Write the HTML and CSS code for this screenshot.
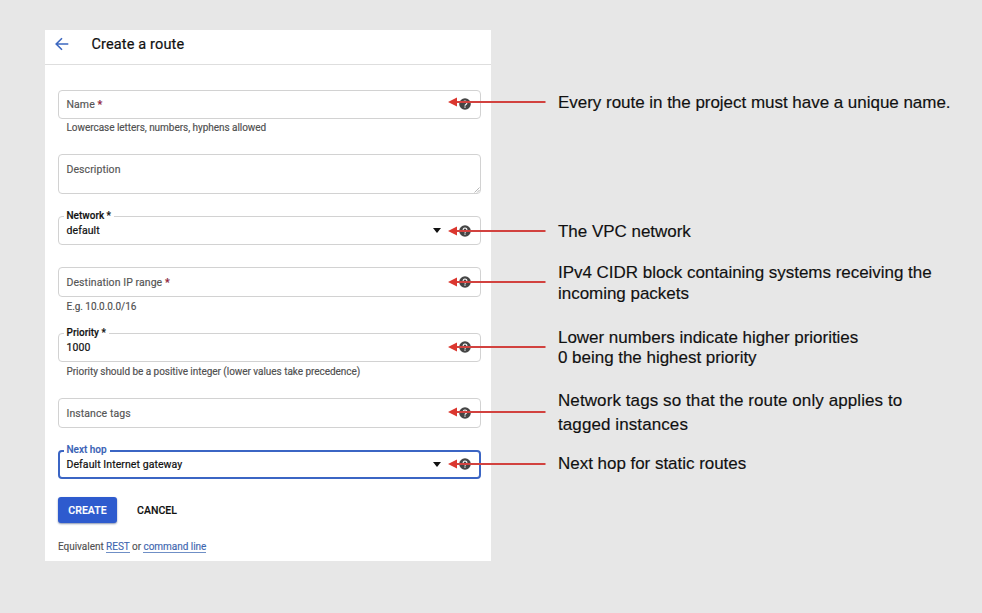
FILE: index.html
```html
<!DOCTYPE html>
<html lang="en">
<head>
<meta charset="utf-8">
<title>Create a route</title>
<link rel="stylesheet" href="styles.css">
</head>
<body>
<svg width="0" height="0" class="defs">
  <symbol id="help" viewBox="0 0 12 12">
    <circle cx="6" cy="6" r="5.8" fill="#454545"/>
    <path d="M4.1 4.9a1.9 1.9 0 1 1 2.9 1.6c-.7.45-1 .7-1 1.3" fill="none" stroke="#fff" stroke-width="1.1"/>
    <rect x="5.4" y="8.5" width="1.2" height="1.2" fill="#fff"/>
  </symbol>
  <symbol id="arrow" viewBox="0 0 98 10">
    <path d="M8 5H97.500" stroke="#d2423f" stroke-width="2"/>
    <path d="M0 5L9 .6V9.400Z" fill="#db372f"/>
  </symbol>
</svg>
<div class="stage">
  <main class="panel">
    <header class="bar">
      <svg class="back" width="14" height="14" viewBox="0 0 14 14"><path d="M13.300 7H1.500M7 1.200L1.200 7L7 12.800" fill="none" stroke="#3d68c0" stroke-width="1.600"/></svg>
      <h1>Create a route</h1>
    </header>
    <form class="form">
      <div class="field name"><span class="ph">Name <b>*</b></span><svg class="help"><use href="#help"/></svg><svg class="arrow up"><use href="#arrow"/></svg></div>
      <p class="hint t-low">Lowercase letters, numbers, hyphens allowed</p>
      <div class="field desc"><span class="ph">Description</span><svg class="grip" width="6" height="6" viewBox="0 0 6 6"><path d="M.5 5.500L5.500 .5M3 5.500L5.500 3" stroke="#999" stroke-width=".7"/></svg></div>
      <div class="field network"><span class="label">Network *</span><span class="val">default</span><i class="caret"></i><svg class="help"><use href="#help"/></svg><svg class="arrow"><use href="#arrow"/></svg></div>
      <div class="field dest"><span class="ph">Destination IP range <b>*</b></span><svg class="help"><use href="#help"/></svg><svg class="arrow"><use href="#arrow"/></svg></div>
      <p class="hint t-eg">E.g. 10.0.0.0/16</p>
      <div class="field priority"><span class="label">Priority *</span><span class="val">1000</span><svg class="help"><use href="#help"/></svg><svg class="arrow"><use href="#arrow"/></svg></div>
      <p class="hint t-should">Priority should be a positive integer (lower values take precedence)</p>
      <div class="field tags"><span class="ph">Instance tags</span><svg class="help"><use href="#help"/></svg><svg class="arrow"><use href="#arrow"/></svg></div>
      <div class="field hop"><span class="label">Next hop</span><span class="val">Default Internet gateway</span><i class="caret"></i><svg class="help"><use href="#help"/></svg><svg class="arrow"><use href="#arrow"/></svg></div>
      <div class="actions"><button type="button" class="create">CREATE</button><button type="button" class="cancel">CANCEL</button></div>
      <p class="equiv">Equivalent <a>REST</a> or <a>command line</a></p>
    </form>
  </main>
  <aside class="notes">
    <p class="n1">Every route in the project must have a unique name.</p>
    <p class="n2">The VPC network</p>
    <p class="n3">IPv4 CIDR block containing systems receiving the<br>incoming packets</p>
    <p class="n4">Lower numbers indicate higher priorities<br>0 being the highest priority</p>
    <p class="n5">Network tags so that the route only applies to<br>tagged instances</p>
    <p class="n6">Next hop for static routes</p>
  </aside>
</div>
</body>
</html>
```
FILE: styles.css
```css
* { box-sizing: border-box; }
body { margin: 0; background: #e7e7e7; font-family: Roboto, sans-serif; color: #111; overflow: hidden; }
h1, p { margin: 0; font-weight: 400; white-space: nowrap; }
.defs { display: block; }
.stage { display: flex; height: 613px; padding: 30px 0 0 45px; align-items: flex-start; }
.panel { width: 446px; height: 531px; background: #fff; }
.bar { display: flex; align-items: center; height: 35px; padding: 0 0 6px 10px; border-bottom: 1px solid #dedede; }
.back { display: block; }
h1 { margin-left: 22.500px; padding-top: 1px; font-size: 14.500px; letter-spacing: .14px; line-height: 20px; font-weight: 400; color: #111; -webkit-text-stroke: .2px #111; }
.form { display: flex; flex-direction: column; padding: 24.500px 10px 0 13px; }
.field { position: relative; display: flex; align-items: center; width: 423px; height: 29px; padding: 0 9px 0 7.500px; border: 1px solid #d2d2d2; border-radius: 4px; font-size: 10.500px; letter-spacing: .08px; line-height: 14px; white-space: nowrap; }
.ph { color: #555; -webkit-text-stroke: .15px #555; }
.ph b { color: #a4183a; }
.val { color: #111; -webkit-text-stroke: .2px #111; }
.name .ph, .dest .ph, .tags .ph, .priority .val, .hop .val { padding-top: 2px; }
.label { position: absolute; left: 5px; top: -8px; padding: 0 3px 0 2.500px; background: #fff; font-size: 10px; letter-spacing: 0; font-weight: 500; line-height: 14px; color: #111; -webkit-text-stroke: .15px currentColor; }
.help { width: 12px; height: 12px; margin-left: auto; }
.caret { border: 4.500px solid transparent; border-top: 5px solid #111; border-bottom: 0; margin-left: auto; }
.caret + .help { margin-left: 18.500px; }
.arrow { position: absolute; left: 389px; top: 8px; width: 98px; height: 10px; }
.arrow.up { top: 6.500px; }
.hint { padding-left: 8.500px; font-size: 10px; letter-spacing: -.04px; line-height: 14px; height: 14px; color: #505050; -webkit-text-stroke: .15px #505050; }
.t-low, .t-eg { margin-top: 2.500px; }
.t-should { margin-top: 3px; }
.desc { height: 40px; margin-top: 19px; align-items: flex-start; padding-top: 8px; }
.grip { position: absolute; right: 0; bottom: 0; }
.network { margin-top: 22px; }
.network .arrow { top: 9px; }
.dest { margin-top: 22px; height: 30px; }
.dest .arrow { top: 9px; }
.priority { margin-top: 19px; }
.tags { margin-top: 19px; height: 30px; }
.hop { margin-top: 22px; border: 2px solid #3b65c4; padding: 0 8px 0 6.500px; }
.hop .label { left: 4px; top: -9px; color: #3861b5; }
.hop .arrow { left: 388px; top: 7px; }
.actions { display: flex; align-items: center; margin-top: 18px; gap: 20px; }
button { height: 26px; padding: 0; border: 0; background: none; font: 500 10.500px/27px Roboto, sans-serif; letter-spacing: .06px; color: #111; -webkit-text-stroke: .15px currentColor; }
.create { width: 59px; border-radius: 3px; background: #2e5bce; color: #fff; box-shadow: 0 1px 2px #8894ae; }
.equiv { margin-top: 18.500px; font-size: 10px; letter-spacing: -.03px; line-height: 12px; color: #505050; -webkit-text-stroke: .12px currentColor; }
.equiv a { color: #3d66af; border-bottom: 1px solid #6f8fc6; }
.notes { margin-left: 67px; font: 17px/20px "Liberation Sans", sans-serif; letter-spacing: -.03px; color: #111; -webkit-text-stroke: .15px #111; }
.n1 { margin-top: 63px; }
.n2 { margin-top: 109px; }
.n3 { margin-top: 21px; line-height: 20.500px; }
.n4 { margin-top: 24px; line-height: 20px; }
.n5 { margin-top: 21px; line-height: 24px; letter-spacing: .09px; }
.n6 { margin-top: 17px; }
```
